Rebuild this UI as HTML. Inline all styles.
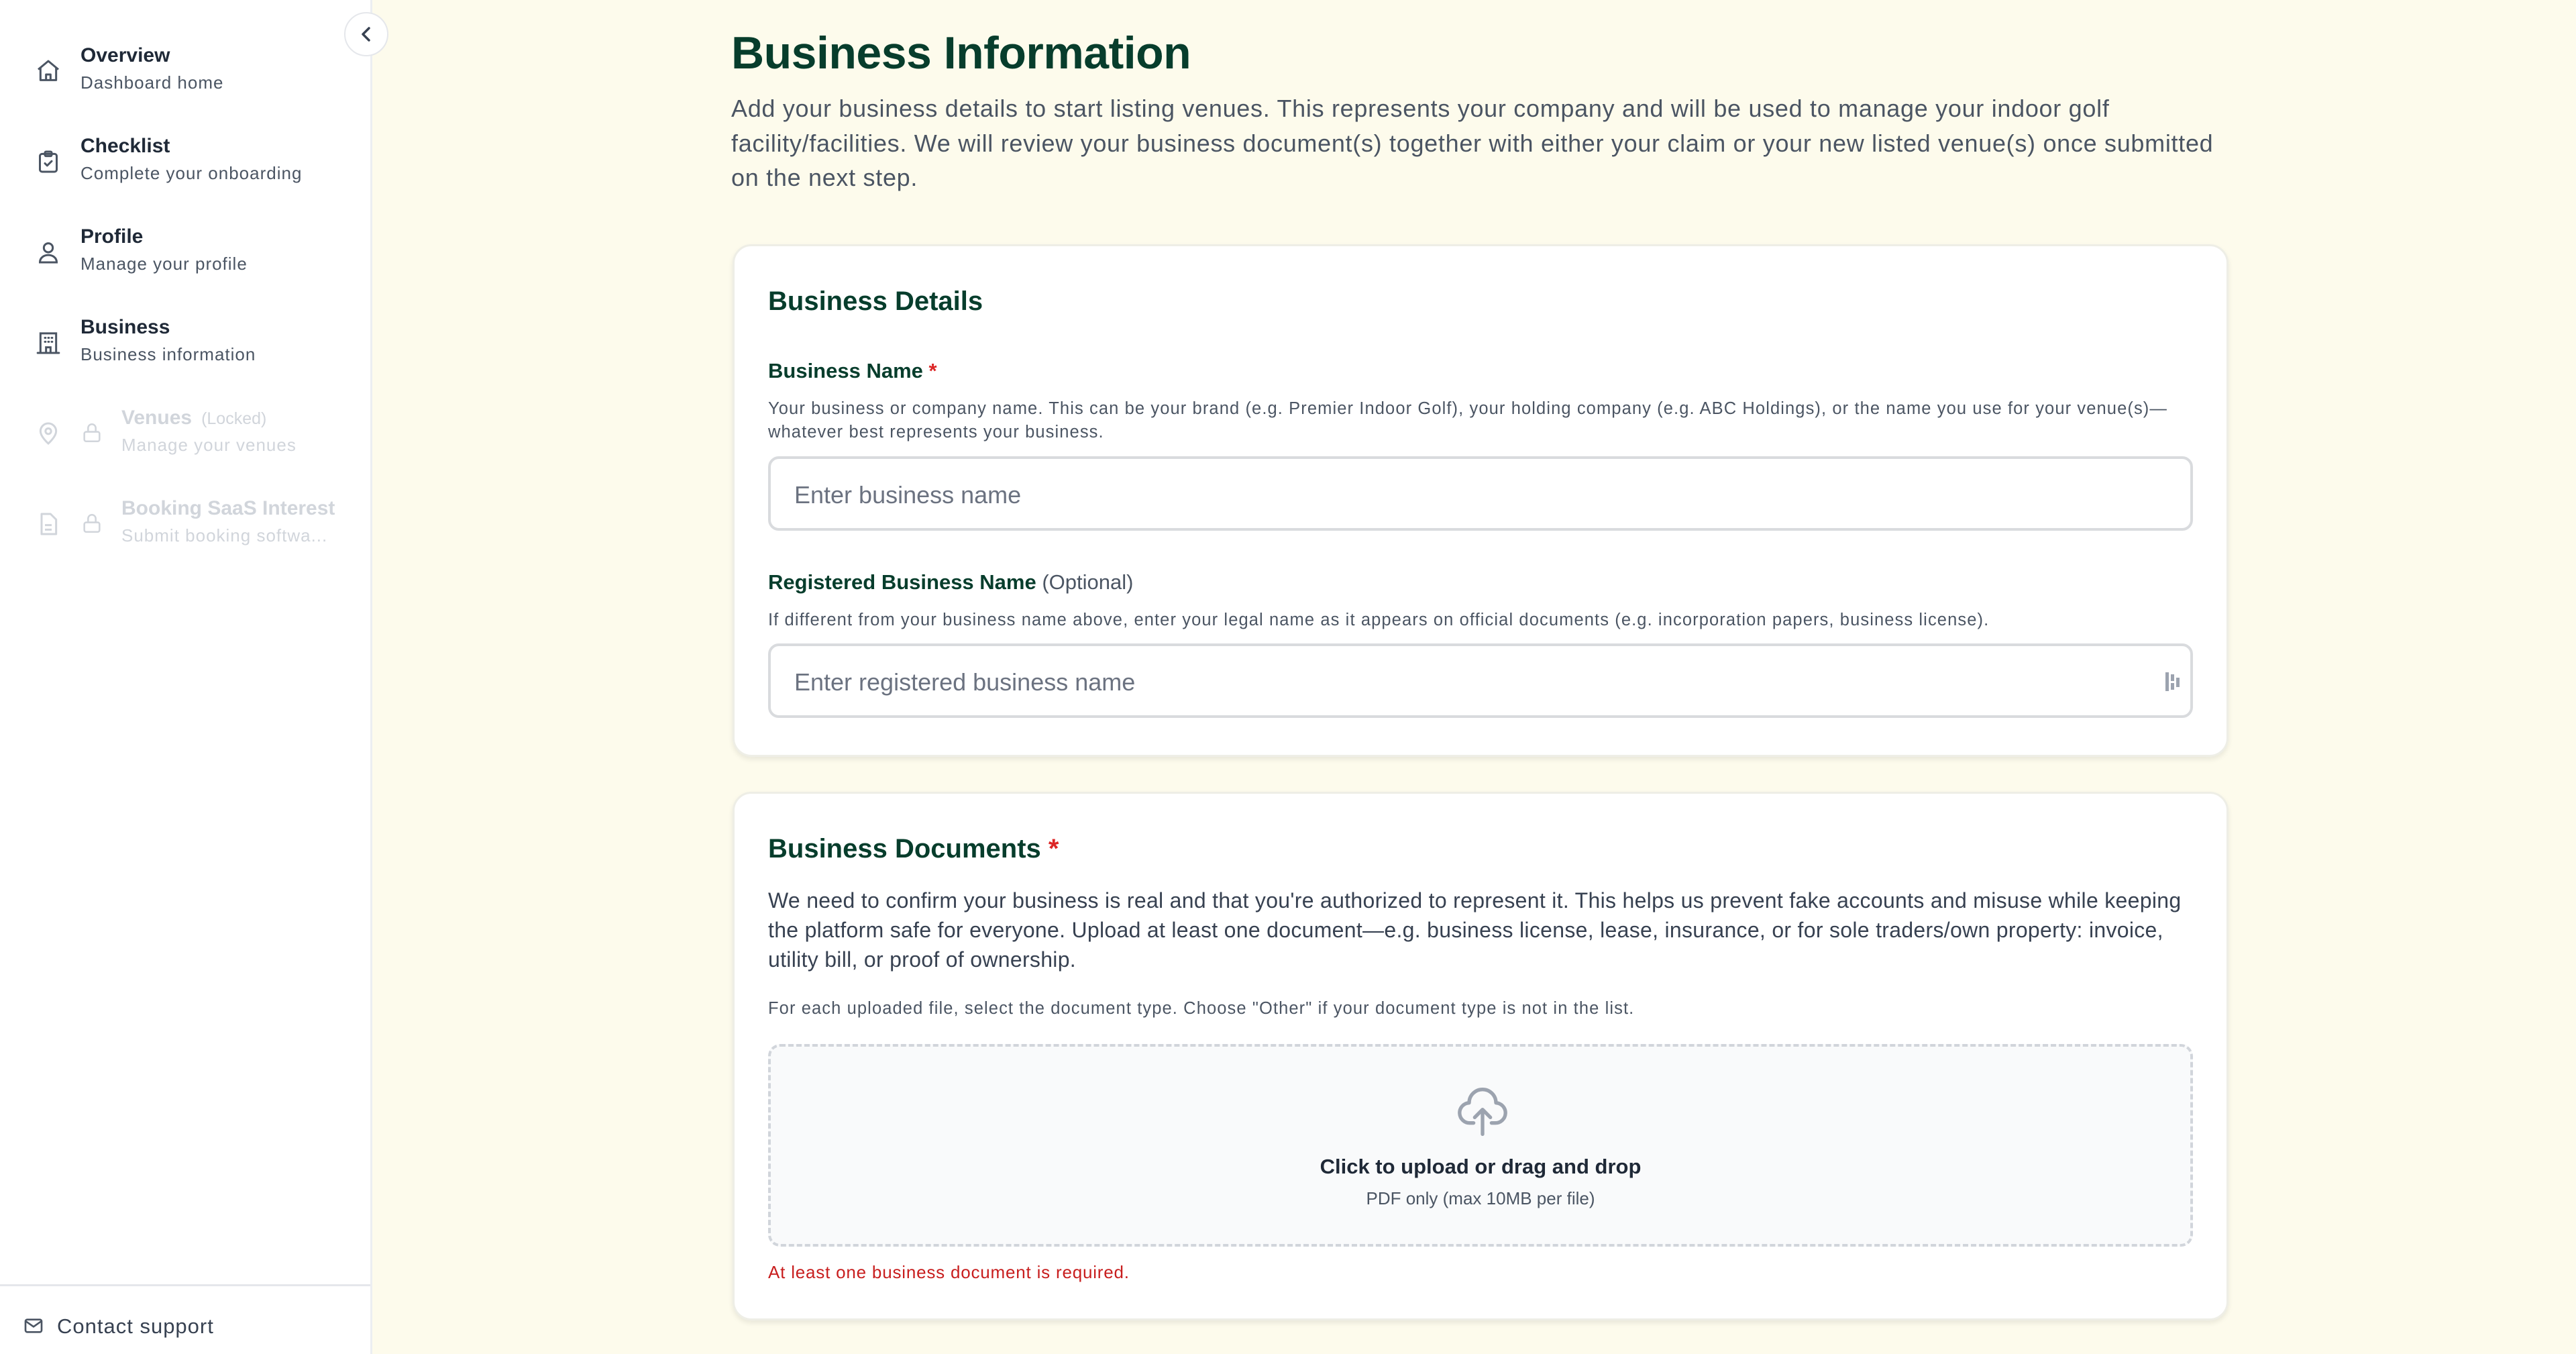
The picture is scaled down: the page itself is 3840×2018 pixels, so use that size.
<!DOCTYPE html>
<html><head><meta charset="utf-8"><style>
*{box-sizing:border-box;margin:0;padding:0}
html,body{width:3840px;height:2018px;overflow:hidden}
body{background:#fdfbec;font-family:"Liberation Sans",Arial,sans-serif;position:relative;color:#4b5563}
.side{position:absolute;left:0;top:0;width:555px;height:2018px;background:#fff;border-right:3px solid #eceef1}
.item{position:absolute;left:0;width:550px}
.item .ic{position:absolute;left:52px;width:40px;height:40px}
.item .t{position:absolute;left:120px;top:0;font-size:30px;font-weight:bold;color:#1f2937;white-space:nowrap}
.item .s{position:absolute;left:120px;top:42px;font-size:26px;color:#4b5563;white-space:nowrap;letter-spacing:1px}
.item.lk .t,.item.lk .s{left:181px;color:#d1d5db}
.item.lk .t small{font-size:25px;font-weight:normal;margin-left:14px}
.collapse{position:absolute;left:513px;top:18px;width:66px;height:66px;border-radius:50%;background:#fff;border:2px solid #e5e7eb;z-index:3}
.foot{position:absolute;left:0;top:1914px;width:552px;border-top:3px solid #e5e7eb;height:104px}
.foot span{position:absolute;left:85px;top:42px;font-size:31px;color:#374151;letter-spacing:1px}
.main{position:absolute;left:1090px;top:0}
h1{position:absolute;left:0;top:40px;font-size:68px;font-weight:bold;color:#073d2c;white-space:nowrap;letter-spacing:-0.5px}
.intro{position:absolute;left:0;top:136px;font-size:36px;line-height:51.5px;white-space:nowrap;color:#4b5563;letter-spacing:0.7px}
.card{position:absolute;left:1092px;width:2230px;background:#fff;border:3px solid #eeeee6;border-radius:28px;box-shadow:0 4px 8px rgba(0,0,0,.08)}
.card .in{position:absolute;left:50px}
h2{font-size:40px;font-weight:bold;color:#073d2c;white-space:nowrap}
.lbl{font-size:31px;font-weight:bold;color:#073d2c;white-space:nowrap}
.lbl .r{color:#dc2626}
.lbl .o{font-weight:normal;color:#4b5563}
.help{font-size:25.5px;line-height:35px;color:#4b5563;white-space:nowrap;letter-spacing:1.1px}
.inp{position:absolute;left:50px;width:2124px;height:111px;border:4px solid #d9dbde;border-radius:16px;background:#fff}
.inp span{position:absolute;left:35px;top:33px;font-size:36px;color:#6b7280}
.drop{position:absolute;left:50px;width:2124px;height:302px;border:4px dashed #d1d5db;border-radius:18px;background:#f9fafb;text-align:center}
</style></head><body>
<div class="side">
  <div class="collapse"><svg width="66" height="66" viewBox="0 0 66 66" style="position:absolute;left:-2px;top:-2px"><path d="M37 24 L28 33 L37 42" fill="none" stroke="#374151" stroke-width="3.5" stroke-linecap="round" stroke-linejoin="round"/></svg></div>

  <div class="item" style="top:66px">
    <svg class="ic" style="top:20px" viewBox="0 0 24 24" fill="none" stroke="#4b5563" stroke-width="1.8" stroke-linejoin="round"><path d="M3 10.5 12 3l9 7.5"/><path d="M5 9v11h14V9"/><path d="M10 20v-5h4v5"/></svg>
    <div class="t">Overview</div><div class="s">Dashboard home</div>
  </div>
  <div class="item" style="top:201px">
    <svg class="ic" style="top:20px" viewBox="0 0 24 24" fill="none" stroke="#4b5563" stroke-width="1.8" stroke-linejoin="round" stroke-linecap="round"><rect x="4.5" y="5" width="15" height="16" rx="2"/><rect x="9" y="3" width="6" height="4" rx="1"/><path d="M9 13.5l2 2 4-4"/></svg>
    <div class="t">Checklist</div><div class="s">Complete your onboarding</div>
  </div>
  <div class="item" style="top:336px">
    <svg class="ic" style="top:20px" viewBox="0 0 24 24" fill="none" stroke="#4b5563" stroke-width="1.8" stroke-linecap="round"><circle cx="12" cy="8" r="4"/><path d="M4.5 21c0-4 3.4-6.5 7.5-6.5s7.5 2.5 7.5 6.5z"/></svg>
    <div class="t">Profile</div><div class="s">Manage your profile</div>
  </div>
  <div class="item" style="top:471px">
    <svg class="ic" style="top:20px" viewBox="0 0 24 24" fill="none" stroke="#4b5563" stroke-width="1.8" stroke-linecap="round"><path d="M2.5 21h19"/><rect x="5" y="3.5" width="14" height="17.5"/><path d="M9 7.5h.5M12 7.5h.5M15 7.5h.5M9 11h.5M12 11h.5M15 11h.5"/><path d="M10 21v-5h4v5"/></svg>
    <div class="t">Business</div><div class="s">Business information</div>
  </div>
  <div class="item lk" style="top:606px">
    <svg class="ic" style="top:20px" viewBox="0 0 24 24" fill="none" stroke="#d1d5db" stroke-width="1.8"><path d="M12 21s-7-6-7-11a7 7 0 0 1 14 0c0 5-7 11-7 11z"/><circle cx="12" cy="10" r="2.5"/></svg>
    <svg class="ic" style="left:120px;top:22px;width:34px;height:34px" viewBox="0 0 24 24" fill="none" stroke="#d1d5db" stroke-width="1.8"><rect x="4" y="11" width="16" height="10" rx="2"/><path d="M8 11V7a4 4 0 0 1 8 0v4"/></svg>
    <div class="t">Venues<small>(Locked)</small></div><div class="s">Manage your venues</div>
  </div>
  <div class="item lk" style="top:741px">
    <svg class="ic" style="top:20px" viewBox="0 0 24 24" fill="none" stroke="#d1d5db" stroke-width="1.8" stroke-linejoin="round"><path d="M6 3h8l5 5v13H6z"/><path d="M9 13h6M9 17h6"/></svg>
    <svg class="ic" style="left:120px;top:22px;width:34px;height:34px" viewBox="0 0 24 24" fill="none" stroke="#d1d5db" stroke-width="1.8"><rect x="4" y="11" width="16" height="10" rx="2"/><path d="M8 11V7a4 4 0 0 1 8 0v4"/></svg>
    <div class="t">Booking SaaS Interest</div><div class="s">Submit booking softwa...</div>
  </div>

  <div class="foot">
    <svg style="position:absolute;left:34px;top:43px" width="32" height="32" viewBox="0 0 24 24" fill="none" stroke="#4b5563" stroke-width="2" stroke-linejoin="round"><rect x="3" y="5" width="18" height="14" rx="2"/><path d="M3.5 7l8.5 6 8.5-6"/></svg>
    <span>Contact support</span>
  </div>
</div>

<div class="main">
  <h1>Business Information</h1>
  <div class="intro">Add your business details to start listing venues. This represents your company and will be used to manage your indoor golf<br>facility/facilities. We will review your business document(s) together with either your claim or your new listed venue(s) once submitted<br>on the next step.</div>
</div>

<div class="card" style="top:364px;height:764px">
  <h2 class="in" style="top:60px">Business Details</h2>
  <div class="lbl in" style="top:168px">Business Name <span class="r">*</span></div>
  <div class="help in" style="top:225px">Your business or company name. This can be your brand (e.g. Premier Indoor Golf), your holding company (e.g. ABC Holdings), or the name you use for your venue(s)—<br>whatever best represents your business.</div>
  <div class="inp" style="top:313px"><span>Enter business name</span></div>
  <div class="lbl in" style="top:483px">Registered Business Name <span class="o">(Optional)</span></div>
  <div class="help in" style="top:540px">If different from your business name above, enter your legal name as it appears on official documents (e.g. incorporation papers, business license).</div>
  <div class="inp" style="top:592px"><span>Enter registered business name</span>
    <svg style="position:absolute;right:12px;top:36px" width="28" height="34" viewBox="0 0 28 34"><rect x="3" y="3" width="5" height="28" fill="#9ca3af"/><rect x="11" y="6" width="5" height="10" fill="#9ca3af"/><rect x="11" y="19" width="5" height="10" fill="#9ca3af"/><rect x="19" y="11" width="5" height="14" fill="#9ca3af"/></svg>
  </div>
</div>

<div class="card" style="top:1180px;height:788px">
  <h2 class="in" style="top:60px">Business Documents <span style="color:#dc2626">*</span></h2>
  <div class="in" style="top:137px;font-size:32px;line-height:44px;white-space:nowrap;color:#374151;letter-spacing:0.3px">We need to confirm your business is real and that you're authorized to represent it. This helps us prevent fake accounts and misuse while keeping<br>the platform safe for everyone. Upload at least one document—e.g. business license, lease, insurance, or for sole traders/own property: invoice,<br>utility bill, or proof of ownership.</div>
  <div class="help in" style="top:303px">For each uploaded file, select the document type. Choose "Other" if your document type is not in the list.</div>
  <div class="drop" style="top:373px">
    <svg style="position:absolute;left:1021px;top:50px" width="80" height="84" viewBox="0 0 24 25" fill="none" stroke="#9ca3af" stroke-width="1.6" stroke-linecap="round" stroke-linejoin="round"><path d="M8 19H6.5A4.5 4.5 0 0 1 6 10a6 6 0 0 1 12 0 4.5 4.5 0 0 1-.5 9H16"/><path d="M12 24V13M8.5 16.5 12 13l3.5 3.5"/></svg>
    <div style="position:absolute;left:0;right:0;top:161px;font-size:31px;font-weight:bold;color:#1f2937">Click to upload or drag and drop</div>
    <div style="position:absolute;left:0;right:0;top:211px;font-size:26px;color:#4b5563">PDF only (max 10MB per file)</div>
  </div>
  <div class="in" style="top:698px;font-size:26px;color:#c81e1e;white-space:nowrap;letter-spacing:0.8px">At least one business document is required.</div>
</div>
</body></html>
